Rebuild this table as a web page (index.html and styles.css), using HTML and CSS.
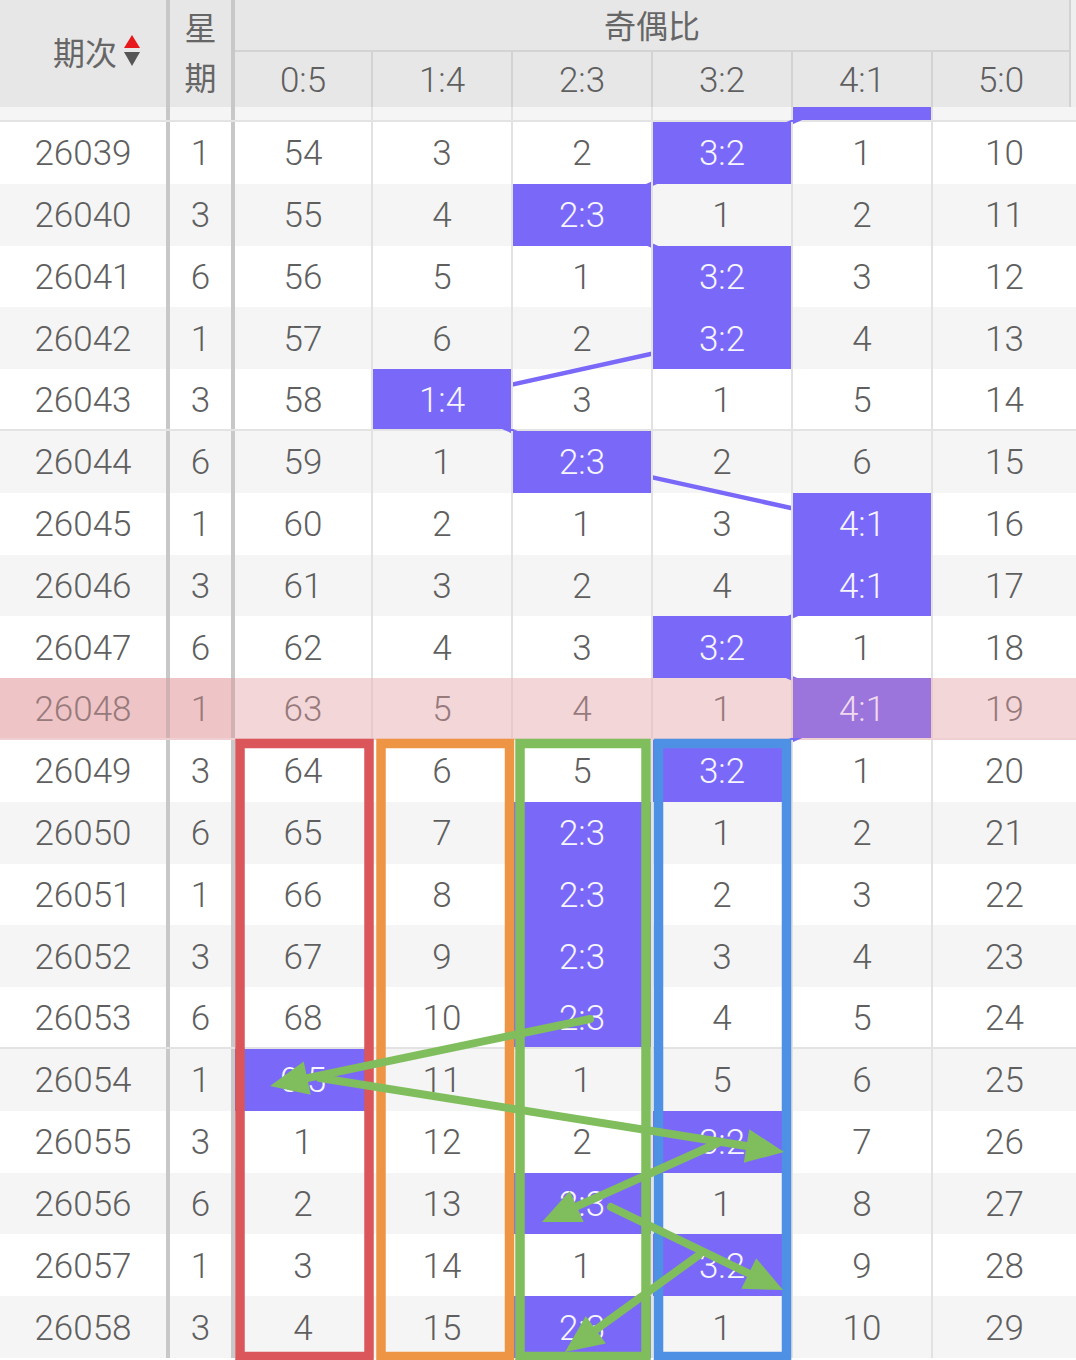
FILE: index.html
```html
<!DOCTYPE html>
<html lang="zh">
<head>
<meta charset="utf-8">
<title>奇偶比</title>
<link rel="stylesheet" href="styles.css">
</head>
<body>
<div class="page">
  <div class="head">
    <div class="h-no"><span>期次</span><svg class="sort" width="16" height="32" viewBox="0 0 16 32"><polygon points="8,0 16,13 0,13" fill="#e8191d"/><polygon points="0,17 16,17 8,31" fill="#555"/></svg></div>
    <div class="h-wk"><span>星</span><span>期</span></div>
    <div class="h-ratio">
      <div class="h-title">奇偶比</div>
      <div class="h-sub"><span>0:5</span><span>1:4</span><span>2:3</span><span>3:2</span><span>4:1</span><span>5:0</span></div>
    </div>
    <div class="h-gap"></div>
  </div>

  <svg class="trend" width="1076" height="1360" viewBox="0 0 1076 1360">
    <polyline points="862,91.1 722,152.9 582,214.7 722,276.5 722,338.3 442,400.1 582,461.9 862,523.7 862,585.5 722,647.3 862,709.1 722,770.9" fill="none" stroke="#7a69f9" stroke-width="4.5" stroke-linejoin="round"/>
  </svg>

  <div class="rows">
    <div class="row part alt grp"><div class="c no"></div><div class="c wk"></div><div class="c"></div><div class="c"></div><div class="c"></div><div class="c"></div><div class="c hl"></div><div class="c"></div></div>
    <div class="row"><div class="c no">26039</div><div class="c wk">1</div><div class="c">54</div><div class="c">3</div><div class="c">2</div><div class="c hl">3:2</div><div class="c">1</div><div class="c">10</div></div>
    <div class="row alt"><div class="c no">26040</div><div class="c wk">3</div><div class="c">55</div><div class="c">4</div><div class="c hl">2:3</div><div class="c">1</div><div class="c">2</div><div class="c">11</div></div>
    <div class="row"><div class="c no">26041</div><div class="c wk">6</div><div class="c">56</div><div class="c">5</div><div class="c">1</div><div class="c hl">3:2</div><div class="c">3</div><div class="c">12</div></div>
    <div class="row alt"><div class="c no">26042</div><div class="c wk">1</div><div class="c">57</div><div class="c">6</div><div class="c">2</div><div class="c hl">3:2</div><div class="c">4</div><div class="c">13</div></div>
    <div class="row grp"><div class="c no">26043</div><div class="c wk">3</div><div class="c">58</div><div class="c hl">1:4</div><div class="c">3</div><div class="c">1</div><div class="c">5</div><div class="c">14</div></div>
    <div class="row alt"><div class="c no">26044</div><div class="c wk">6</div><div class="c">59</div><div class="c">1</div><div class="c hl">2:3</div><div class="c">2</div><div class="c">6</div><div class="c">15</div></div>
    <div class="row"><div class="c no">26045</div><div class="c wk">1</div><div class="c">60</div><div class="c">2</div><div class="c">1</div><div class="c">3</div><div class="c hl">4:1</div><div class="c">16</div></div>
    <div class="row alt"><div class="c no">26046</div><div class="c wk">3</div><div class="c">61</div><div class="c">3</div><div class="c">2</div><div class="c">4</div><div class="c hl">4:1</div><div class="c">17</div></div>
    <div class="row"><div class="c no">26047</div><div class="c wk">6</div><div class="c">62</div><div class="c">4</div><div class="c">3</div><div class="c hl">3:2</div><div class="c">1</div><div class="c">18</div></div>
    <div class="row pink grp"><div class="c no">26048</div><div class="c wk">1</div><div class="c">63</div><div class="c">5</div><div class="c">4</div><div class="c">1</div><div class="c hl">4:1</div><div class="c">19</div></div>
    <div class="row"><div class="c no">26049</div><div class="c wk">3</div><div class="c">64</div><div class="c">6</div><div class="c">5</div><div class="c hl">3:2</div><div class="c">1</div><div class="c">20</div></div>
    <div class="row alt"><div class="c no">26050</div><div class="c wk">6</div><div class="c">65</div><div class="c">7</div><div class="c hl">2:3</div><div class="c">1</div><div class="c">2</div><div class="c">21</div></div>
    <div class="row"><div class="c no">26051</div><div class="c wk">1</div><div class="c">66</div><div class="c">8</div><div class="c hl">2:3</div><div class="c">2</div><div class="c">3</div><div class="c">22</div></div>
    <div class="row alt"><div class="c no">26052</div><div class="c wk">3</div><div class="c">67</div><div class="c">9</div><div class="c hl">2:3</div><div class="c">3</div><div class="c">4</div><div class="c">23</div></div>
    <div class="row grp"><div class="c no">26053</div><div class="c wk">6</div><div class="c">68</div><div class="c">10</div><div class="c hl">2:3</div><div class="c">4</div><div class="c">5</div><div class="c">24</div></div>
    <div class="row alt"><div class="c no">26054</div><div class="c wk">1</div><div class="c hl">0:5</div><div class="c">11</div><div class="c">1</div><div class="c">5</div><div class="c">6</div><div class="c">25</div></div>
    <div class="row"><div class="c no">26055</div><div class="c wk">3</div><div class="c">1</div><div class="c">12</div><div class="c">2</div><div class="c hl">3:2</div><div class="c">7</div><div class="c">26</div></div>
    <div class="row alt"><div class="c no">26056</div><div class="c wk">6</div><div class="c">2</div><div class="c">13</div><div class="c hl">2:3</div><div class="c">1</div><div class="c">8</div><div class="c">27</div></div>
    <div class="row"><div class="c no">26057</div><div class="c wk">1</div><div class="c">3</div><div class="c">14</div><div class="c">1</div><div class="c hl">3:2</div><div class="c">9</div><div class="c">28</div></div>
    <div class="row alt"><div class="c no">26058</div><div class="c wk">3</div><div class="c">4</div><div class="c">15</div><div class="c hl">2:3</div><div class="c">1</div><div class="c">10</div><div class="c">29</div></div>
  </div>

  <svg class="marks" width="1076" height="1360" viewBox="0 0 1076 1360">
    <g fill="none" stroke-width="9.5">
      <rect x="240" y="743.5" width="129" height="613" stroke="#da565b"/>
      <rect x="381" y="743.5" width="128.5" height="613" stroke="#ee9545"/>
      <rect x="520" y="743.5" width="126" height="613" stroke="#80be5d"/>
      <rect x="658.5" y="743.5" width="128" height="613" stroke="#4e90e4"/>
    </g>
    <g stroke="#80be5d" stroke-width="8" stroke-linecap="round" fill="none">
      <line x1="590" y1="1019" x2="307.2" y2="1078.2"/>
      <line x1="320" y1="1078" x2="746.5" y2="1146"/>
      <line x1="718" y1="1143" x2="576.7" y2="1206.4"/>
      <line x1="611" y1="1207" x2="748.8" y2="1273.5"/>
      <line x1="699" y1="1255" x2="595.8" y2="1329.7"/>
    </g>
    <g fill="#80be5d">
      <polygon points="270,1086 303.7,1061.6 310.7,1094.8"/>
      <polygon points="784,1152 743.8,1162.8 749.2,1129.2"/>
      <polygon points="542,1222 569.7,1190.9 583.7,1221.9"/>
      <polygon points="783,1290 741.4,1288.8 756.2,1258.2"/>
      <polygon points="565,1352 585.8,1315.9 605.8,1343.5"/>
    </g>
  </svg>
</div>
</body>
</html>
```

FILE: styles.css
```css
* { box-sizing: border-box; }

html, body {
  margin: 0;
  padding: 0;
  background: #fff;
}

.page {
  position: relative;
  width: 1076px;
  height: 1360px;
  overflow: hidden;
  font-family: Roboto, "Noto Sans CJK SC", sans-serif;
  font-weight: 300;
  color: #5f5f5f;
}

/* ---------- header ---------- */
.head {
  position: relative;
  z-index: 3;
  display: grid;
  grid-template-columns: 170px 65px 836px 5px;
  height: 107px;
  background: #e7e7e7;
}

.h-no {
  border-right: 4px solid #c8c8c8;
  display: flex;
  align-items: center;
  justify-content: flex-end;
  gap: 7px;
  padding-right: 26px;
  padding-bottom: 5px;
  font-family: "Noto Sans CJK SC", sans-serif;
  font-weight: 400;
  font-size: 32px;
  color: #666;
}

.h-no .sort { flex: none; }

.h-wk {
  border-right: 4px solid #c8c8c8;
  display: flex;
  flex-direction: column;
  align-items: center;
  padding-top: 1px;
  font-family: "Noto Sans CJK SC", sans-serif;
  font-weight: 400;
  font-size: 32px;
  line-height: 50px;
  color: #666;
}

.h-ratio {
  border-right: 2px solid #d3d3d3;
  display: flex;
  flex-direction: column;
}

.h-title {
  height: 52px;
  border-bottom: 2px solid #d3d3d3;
  text-align: center;
  line-height: 48px;
  font-family: "Noto Sans CJK SC", sans-serif;
  font-weight: 400;
  font-size: 32px;
  color: #666;
}

.h-sub {
  flex: 1;
  display: grid;
  grid-template-columns: 138px 140px 140px 140px 140px 1fr;
}

.h-sub span {
  display: flex;
  align-items: center;
  justify-content: center;
  border-right: 2px solid #d3d3d3;
  font-size: 35px;
  padding-top: 2px;
}

.h-sub span:last-child { border-right: none; }

.h-gap { background: #efefef; }

/* ---------- overlays ---------- */
.trend {
  position: absolute;
  top: 0;
  left: 0;
  z-index: 1;
}

.marks {
  position: absolute;
  top: 0;
  left: 0;
  z-index: 4;
  pointer-events: none;
}

/* ---------- body rows ---------- */
.row {
  display: grid;
  grid-template-columns: 170px 65px 138px 140px 140px 140px 140px 1fr;
  height: 61.8px;
  background: #fff;
}

.row.alt { background: #f5f5f5; }
.row.part { height: 15px; }
.row.grp { border-bottom: 2px solid #e3e3e3; }

.c {
  position: relative;
  z-index: 2;
  display: flex;
  align-items: center;
  justify-content: center;
  padding-top: 2px;
  font-size: 35px;
  border-right: 2px solid #e2e2e2;
}

.c:last-child { border-right: none; }

.c.no,
.c.wk { border-right: 4px solid #c8c8c8; }

.c.hl {
  background: #7a69f9;
  color: #f7f5ff;
}

/* highlighted (current) row */
.row.pink {
  background: #f3d6d8;
  color: #977a7c;
  border-bottom-color: #efd0d2;
}

.row.pink .c { border-right-color: #e7cacc; }

.row.pink .c.no,
.row.pink .c.wk {
  background: #efc4c6;
  border-right-color: #d2b1b3;
}

.row.pink .c.hl {
  background: #9c75dc;
  color: #f0dbee;
}
```
